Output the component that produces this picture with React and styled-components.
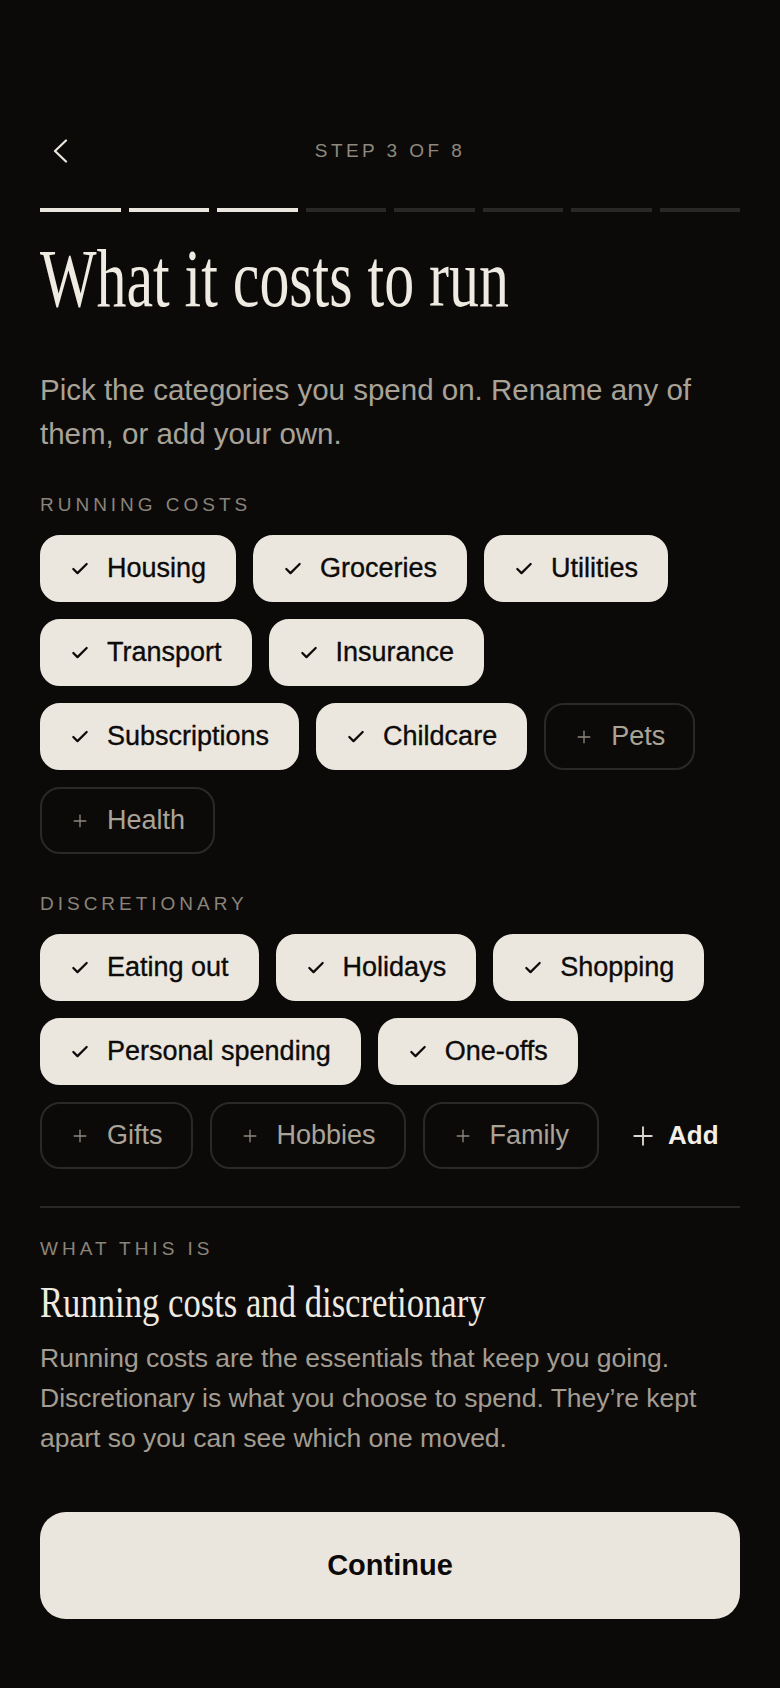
import React, { useState } from "react";
import styled, { createGlobalStyle } from "styled-components";
import { Check, Plus } from "lucide-react";

const GlobalStyle = createGlobalStyle`
  html, body {
    margin: 0;
    padding: 0;
    background: #0c0a09;
  }
  * {
    box-sizing: border-box;
  }
`;

const RUNNING = [
    { name: "Housing", on: true },
    { name: "Groceries", on: true },
    { name: "Utilities", on: true },
    { name: "Transport", on: true },
    { name: "Insurance", on: true },
    { name: "Subscriptions", on: true },
    { name: "Childcare", on: true },
    { name: "Pets", on: false },
    { name: "Health", on: false },
];

const DISCRETIONARY = [
    { name: "Eating out", on: true },
    { name: "Holidays", on: true },
    { name: "Shopping", on: true },
    { name: "Personal spending", on: true },
    { name: "One-offs", on: true },
    { name: "Gifts", on: false },
    { name: "Hobbies", on: false },
    { name: "Family", on: false },
];

function ChipGroup({ items, onToggle, withAdd }) {
    return (
        <Styled.Chips>
            {items.map((item) => (
                <Styled.Chip key={item.name} $selected={item.on} onClick={() => onToggle(item.name)}>
                    {item.on ? <Check size={20} strokeWidth={2.7}/> : <Plus size={20} strokeWidth={1.6}/>}
                    <span>{item.name}</span>
                </Styled.Chip>
            ))}
            {withAdd && (
                <Styled.AddButton>
                    <Plus size={30} strokeWidth={1.5}/>
                    <span>Add</span>
                </Styled.AddButton>
            )}
        </Styled.Chips>
    );
}

function App() {
    const [running, setRunning] = useState(RUNNING);
    const [extra, setExtra] = useState(DISCRETIONARY);
    const step = 3;
    const total = 8;

    const toggle = (setter) => (name) =>
        setter((list) => list.map((c) => (c.name === name ? { ...c, on: !c.on } : c)));

    return (
        <Styled.Root>
            <GlobalStyle/>
            <Styled.Header>
                <Styled.BackButton aria-label="Back">
                    <svg width="16" height="24" viewBox="0 0 16 24" fill="none">
                        <polyline points="14,1.5 3,12 14,22.5" stroke="#ebe6dd" strokeWidth="2.2"
                                  strokeLinecap="round" strokeLinejoin="round"/>
                    </svg>
                </Styled.BackButton>
                <Styled.StepLabel>Step {step} of {total}</Styled.StepLabel>
                <span/>
            </Styled.Header>

            <Styled.Progress>
                {Array.from({ length: total }).map((_, i) => (
                    <Styled.Segment key={i} $done={i < step}/>
                ))}
            </Styled.Progress>

            <Styled.Title>What it costs to run</Styled.Title>
            <Styled.Intro>Pick the categories you spend on. Rename any of them, or add your own.</Styled.Intro>

            <Styled.SectionLabel $top={37}>Running costs</Styled.SectionLabel>
            <ChipGroup items={running} onToggle={toggle(setRunning)}/>

            <Styled.SectionLabel $top={38}>Discretionary</Styled.SectionLabel>
            <ChipGroup items={extra} onToggle={toggle(setExtra)} withAdd/>

            <Styled.Divider/>

            <Styled.SectionLabel $top={29}>What this is</Styled.SectionLabel>
            <Styled.SubTitle>Running costs and discretionary</Styled.SubTitle>
            <Styled.Explainer>
                Running costs are the essentials that keep you going. Discretionary is what you choose to
                spend. They’re kept apart so you can see which one moved.
            </Styled.Explainer>

            <Styled.Continue>Continue</Styled.Continue>
        </Styled.Root>
    );
}

export default App;

const Styled = {
    Root: styled.div`
    min-height: 1688px;
    padding: 121px 40px 60px;
    background: #0c0a09;
    font-family: "Liberation Sans", Arial, sans-serif;
    color: #efebe2;
    `,
    Header: styled.div`
    display: grid;
    grid-template-columns: 60px 1fr 60px;
    align-items: center;
    height: 60px;
    `,
    BackButton: styled.button`
    display: flex;
    align-items: center;
    width: 40px;
    height: 40px;
    padding: 0 0 0 12px;
    
    background: none;
    border: none;
    cursor: pointer;
    `,
    StepLabel: styled.div`
    text-align: center;
    font-size: 19px;
    letter-spacing: 0.18em;
    text-transform: uppercase;
    color: #8e897f;
    `,
    Progress: styled.div`
    display: flex;
    gap: 8px;
    margin-top: 27px;
    `,
    Segment: styled.div`
    flex: 1;
    height: 4px;
    background: ${(p) => (p.$done ? "#ebe6dd" : "#2a2826")};
    `,
    Title: styled.h1`
    margin: 26px 0 0;
    font-family: "Liberation Serif", "Times New Roman", serif;
    font-weight: 400;
    font-size: 82px;
    line-height: 82px;
    white-space: nowrap;
    color: #efebe2;
    transform: scaleX(0.73);
    transform-origin: left center;
    `,
    Intro: styled.p`
    margin: 48px 0 0;
    font-size: 29.5px;
    line-height: 44px;
    color: #a9a397;
    `,
    SectionLabel: styled.div`
    margin-top: ${(p) => p.$top}px;
    font-size: 19px;
    line-height: 24px;
    letter-spacing: 0.21em;
    text-transform: uppercase;
    color: #8a847a;
    `,
    Chips: styled.div`
    display: flex;
    flex-wrap: wrap;
    gap: 17px;
    margin-top: 18px;
    `,
    Chip: styled.button`
    display: flex;
    align-items: center;
    gap: 17px;
    height: 67px;
    padding: 0 28px;
    
    border-radius: 20px;
    border: 2px solid ${(p) => (p.$selected ? "#ebe7df" : "#2b2825")};
    background: ${(p) => (p.$selected ? "#ebe7df" : "transparent")};
    color: ${(p) => (p.$selected ? "#0d0b0a" : "#aaa498")};
    
    font-family: "Liberation Sans", Arial, sans-serif;
    font-size: 27px;
    line-height: 1;
    -webkit-text-stroke: ${(p) => (p.$selected ? "0.35px currentColor" : "0")};
    cursor: pointer;
    
    & > svg {
    flex-shrink: 0;
    color: ${(p) => (p.$selected ? "#0d0b0a" : "#8d877d")};
    }
    `,
    AddButton: styled.button`
    display: flex;
    align-items: center;
    gap: 10px;
    height: 67px;
    padding: 0 12px;
    
    background: none;
    border: none;
    color: #f4efe6;
    
    font-family: "Liberation Sans", Arial, sans-serif;
    font-size: 26px;
    font-weight: 700;
    cursor: pointer;
    
    & > svg {
    color: #dcd7ce;
    }
    `,
    Divider: styled.hr`
    margin: 37px 0 0;
    height: 2px;
    border: none;
    background: #2a2724;
    `,
    SubTitle: styled.h2`
    margin: 16px 0 0;
    font-family: "Liberation Serif", "Times New Roman", serif;
    font-weight: 400;
    font-size: 45px;
    line-height: 50px;
    white-space: nowrap;
    color: #efeae1;
    transform: scaleX(0.77);
    transform-origin: left center;
    `,
    Explainer: styled.p`
    margin: 11px 0 0;
    font-size: 26.5px;
    line-height: 40px;
    color: #a39d92;
    `,
    Continue: styled.button`
    display: block;
    width: 100%;
    height: 107px;
    margin-top: 54px;
    
    background: #ebe6dd;
    border: none;
    border-radius: 26px;
    color: #0c0a09;
    
    font-family: "Liberation Sans", Arial, sans-serif;
    font-size: 29px;
    font-weight: 700;
    cursor: pointer;
    `,
};
